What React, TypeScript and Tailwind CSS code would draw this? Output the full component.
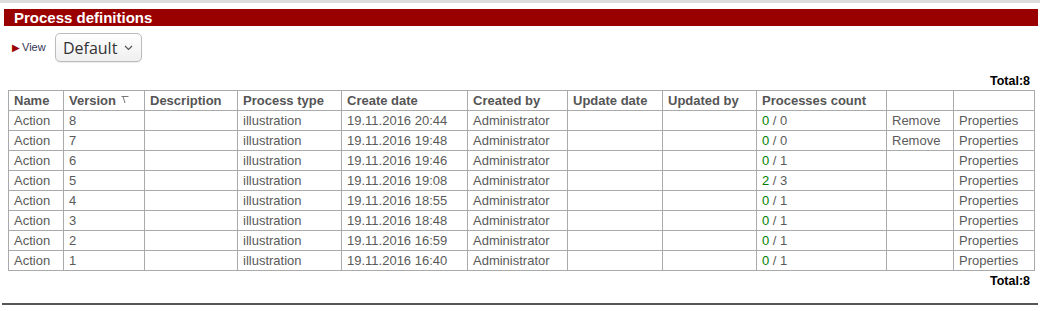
import React from 'react';

interface ProcessRow {
  version: number;
  created: string;
  done: number;
  total: number;
  removable: boolean;
}

const rows: ProcessRow[] = [
  { version: 8, created: '19.11.2016 20:44', done: 0, total: 0, removable: true },
  { version: 7, created: '19.11.2016 19:48', done: 0, total: 0, removable: true },
  { version: 6, created: '19.11.2016 19:46', done: 0, total: 1, removable: false },
  { version: 5, created: '19.11.2016 19:08', done: 2, total: 3, removable: false },
  { version: 4, created: '19.11.2016 18:55', done: 0, total: 1, removable: false },
  { version: 3, created: '19.11.2016 18:48', done: 0, total: 1, removable: false },
  { version: 2, created: '19.11.2016 16:59', done: 0, total: 1, removable: false },
  { version: 1, created: '19.11.2016 16:40', done: 0, total: 1, removable: false },
];

const widths = [55, 81, 93, 104, 126, 100, 95, 94, 130, 67, 81];

const SortIcon = () => (
  <svg width="8" height="8" viewBox="0 0 8 8" className="inline-block ml-[5px] -mt-[3px] align-middle">
    <path d="M0.5 0.5H7.5M2 0.5L4 7" stroke="#777" strokeWidth="1" fill="none" />
  </svg>
);

const Th = ({ children }: { children?: React.ReactNode }) => (
  <th className="border border-[#aaa] px-[5px] h-[20px] text-left font-bold text-[#555] whitespace-nowrap">
    {children}
  </th>
);

const Td = ({ children }: { children?: React.ReactNode }) => (
  <td className="border border-[#aaa] px-[5px] h-[20px] text-[#5a5a5a] whitespace-nowrap">{children}</td>
);

const Total = () => (
  <div className="flex justify-end pr-[10px] text-[12.5px] font-bold text-black leading-[15px]">Total:8</div>
);

export default function App() {
  return (
    <div className="w-[1040px] h-[311px] bg-white font-['Liberation_Sans',Arial,sans-serif] overflow-hidden">
      <div className="h-[3px] bg-[#dddddd]" />

      {/* Section header */}
      <div className="ml-[4px] mr-[2px] mt-[6px] h-[17px] bg-[#990000] pl-[10px] text-white font-bold text-[15px] leading-[17px]">
        Process definitions
      </div>

      {/* View selector */}
      <div className="flex items-center mt-[7px] pl-[12px] h-[29px]">
        <span className="text-[#990000] text-[10px] leading-none mr-[2px]">&#9654;</span>
        <span className="text-[11px] text-[#335] mr-[9px]">View</span>
        <button className="h-[29px] w-[87px] flex items-center justify-center gap-[7px] rounded-[5px] border border-[#bbb] bg-gradient-to-b from-white to-[#efefef] shadow-[0_1px_1px_rgba(0,0,0,0.08)] text-[16px] text-[#333] font-['Open_Sans',sans-serif]">
          Default
          <svg width="9" height="6" viewBox="0 0 9 6">
            <path d="M1 1l3.5 3.5L8 1" stroke="#555" strokeWidth="1.2" fill="none" />
          </svg>
        </button>
      </div>

      <div className="mt-[12px]">
        <Total />
      </div>

      <table className="ml-[8px] mt-[1px] table-fixed border-collapse text-[13px] leading-[15px] w-[1026px]">
        <colgroup>
          {widths.map((w, i) => (
            <col key={i} style={{ width: w }} />
          ))}
        </colgroup>
        <thead>
          <tr>
            <Th>Name</Th>
            <Th>
              Version
              <SortIcon />
            </Th>
            <Th>Description</Th>
            <Th>Process type</Th>
            <Th>Create date</Th>
            <Th>Created by</Th>
            <Th>Update date</Th>
            <Th>Updated by</Th>
            <Th>Processes count</Th>
            <Th />
            <Th />
          </tr>
        </thead>
        <tbody>
          {rows.map((r) => (
            <tr key={r.version}>
              <Td>Action</Td>
              <Td>{r.version}</Td>
              <Td />
              <Td>illustration</Td>
              <Td>{r.created}</Td>
              <Td>Administrator</Td>
              <Td />
              <Td />
              <Td>
                <span className="text-[#008000]">{r.done}</span> / {r.total}
              </Td>
              <Td>{r.removable ? 'Remove' : ''}</Td>
              <Td>Properties</Td>
            </tr>
          ))}
        </tbody>
      </table>

      <div className="mt-[3px]">
        <Total />
      </div>

      <div className="mx-[2px] mt-[14px] h-[2px] bg-[#555]" />
    </div>
  );
}
